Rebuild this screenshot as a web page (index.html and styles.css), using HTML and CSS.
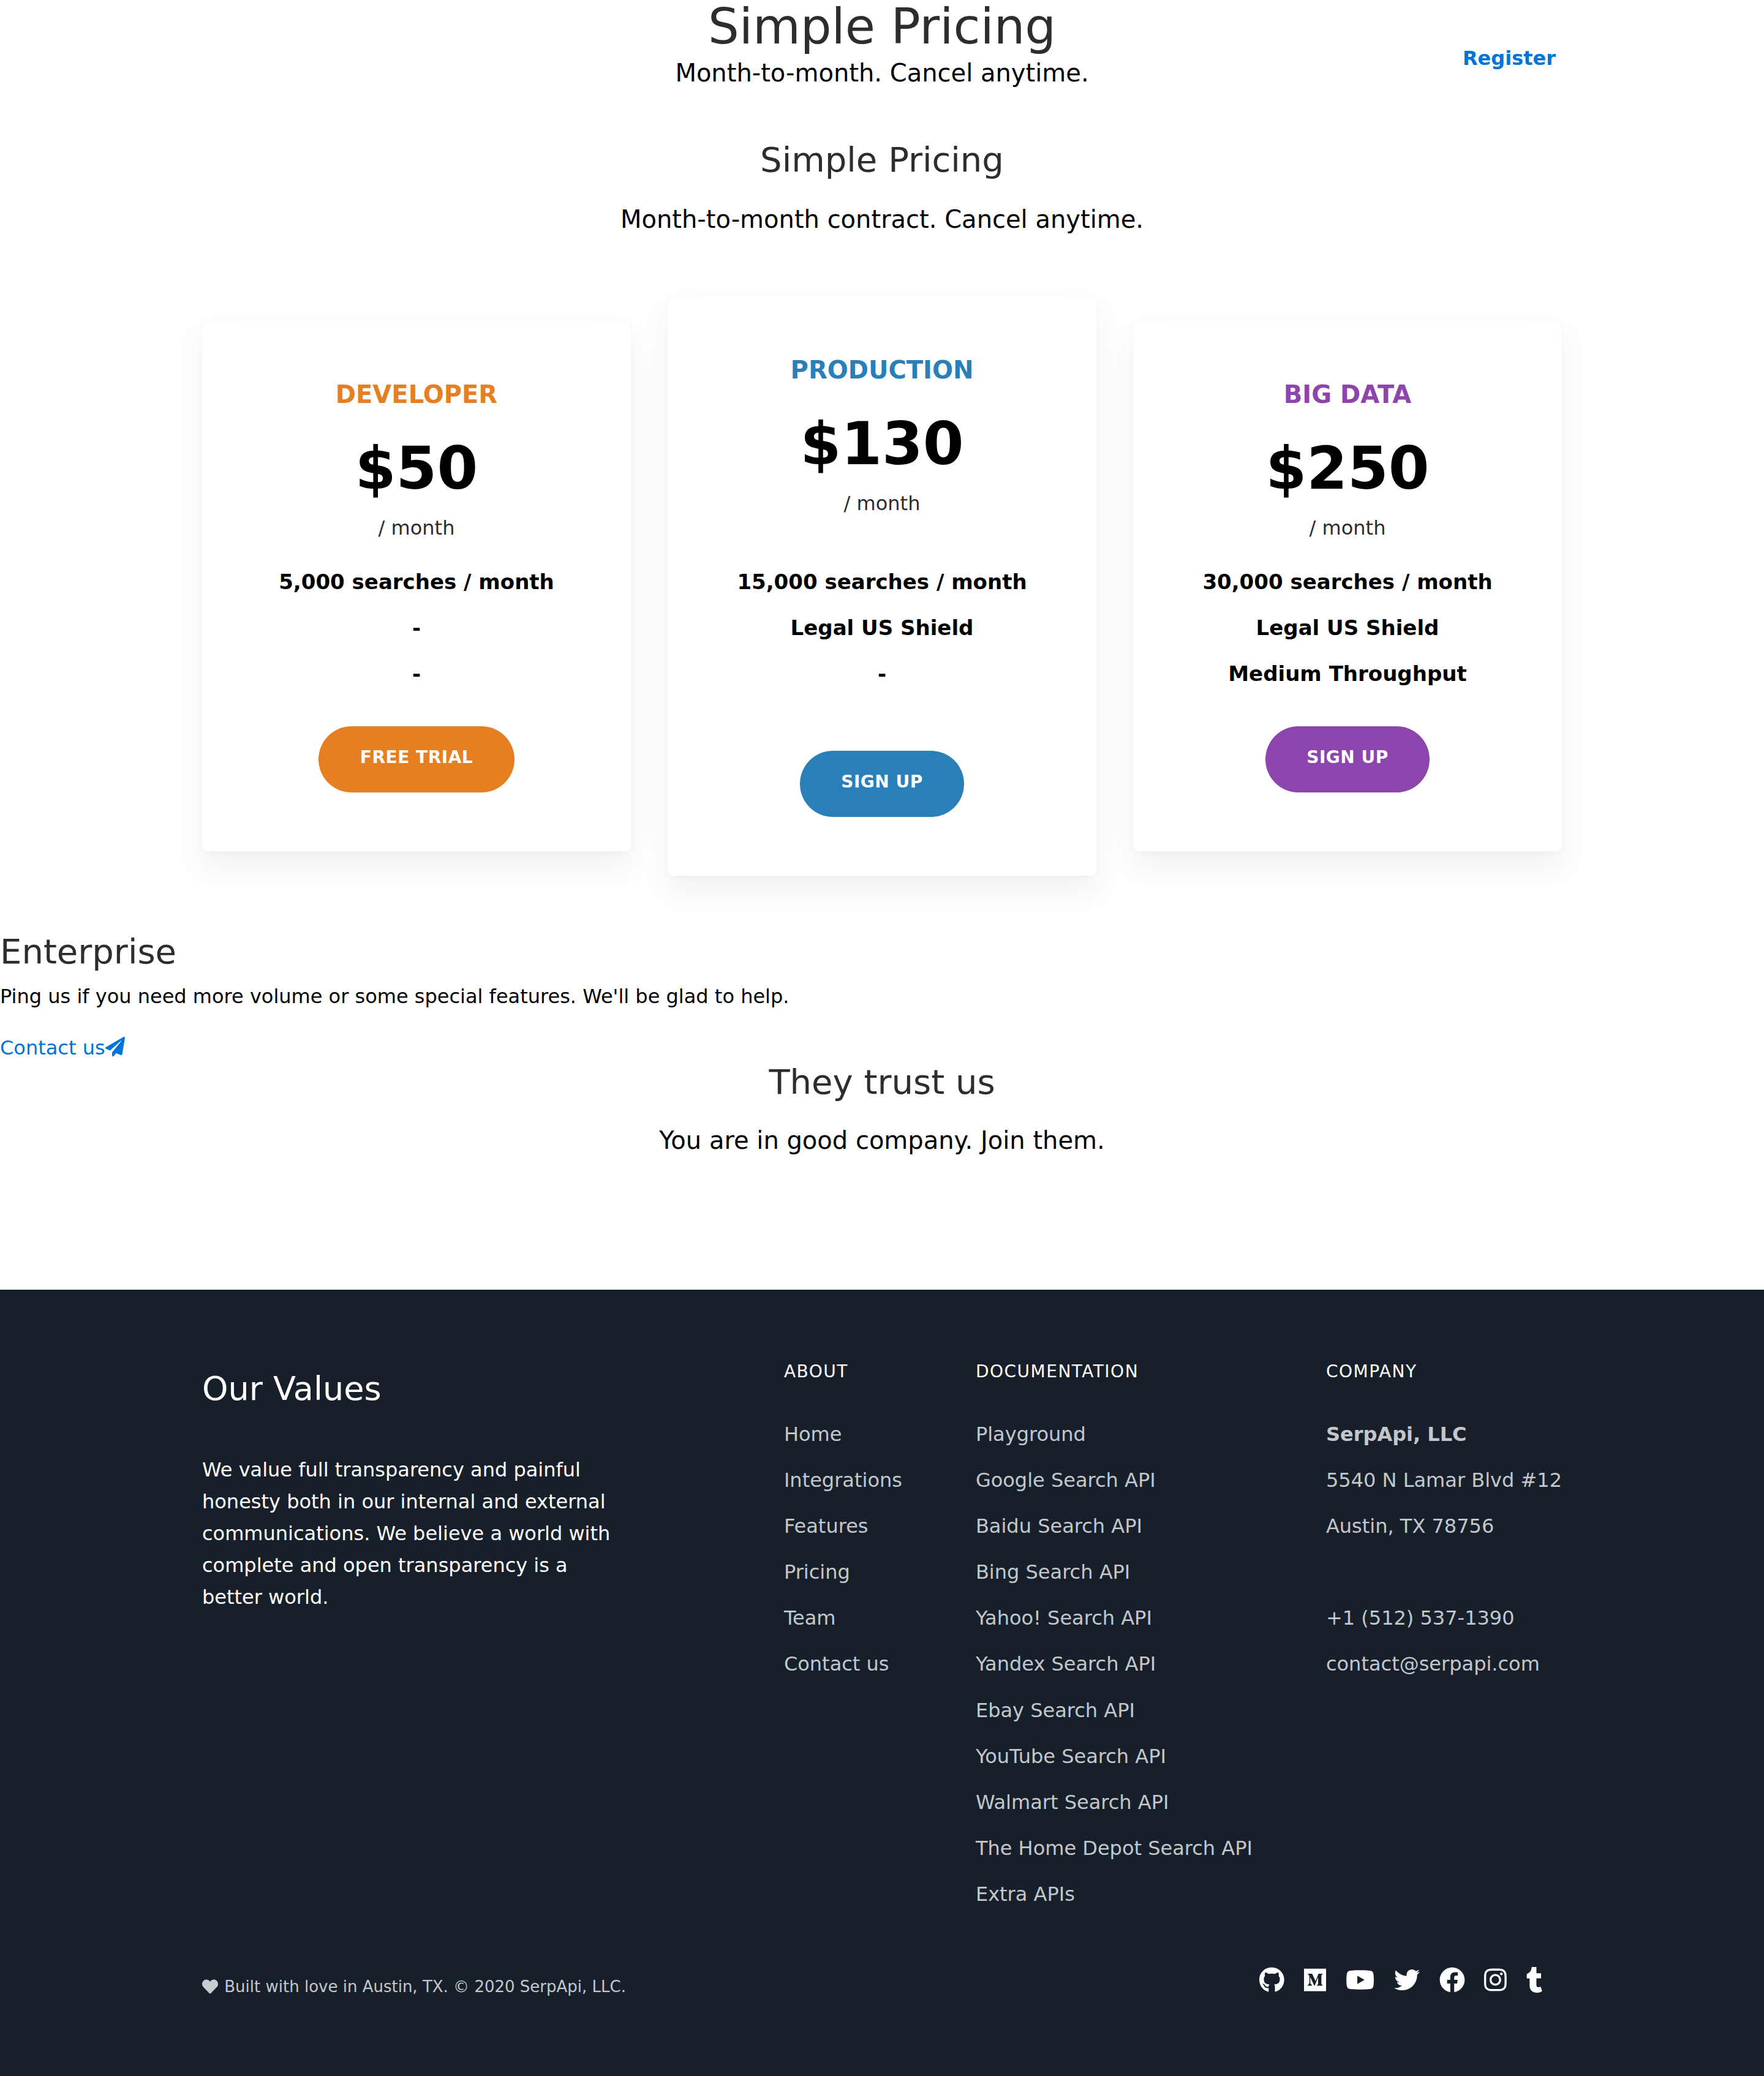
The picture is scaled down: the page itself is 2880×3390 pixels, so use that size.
FILE: index.html
```html
<!DOCTYPE html>
<html lang="en">
<head>
    <meta charset="UTF-8">
    <meta name="viewport" content="width=device-width, initial-scale=1.0">
    <title>Simple Pricing</title>
    <link rel="stylesheet" href="styles.css">
</head>
<body>
    <header class="top-bar">
        <div class="top-title">
            <h1>Simple Pricing</h1>
            <p>Month-to-month. Cancel anytime.</p>
        </div>
        <a class="register" href="#">Register</a>
    </header>

    <section class="intro">
        <h2>Simple Pricing</h2>
        <p>Month-to-month contract. Cancel anytime.</p>
    </section>

    <section class="plans">
        <div class="plan plan-developer">
            <h3>DEVELOPER</h3>
            <div class="price">$50</div>
            <div class="period">/ month</div>
            <ul>
                <li>5,000 searches / month</li>
                <li>-</li>
                <li>-</li>
            </ul>
            <a class="plan-btn" href="#">FREE TRIAL</a>
        </div>
        <div class="plan plan-production">
            <h3>PRODUCTION</h3>
            <div class="price">$130</div>
            <div class="period">/ month</div>
            <ul>
                <li>15,000 searches / month</li>
                <li>Legal US Shield</li>
                <li>-</li>
            </ul>
            <a class="plan-btn" href="#">SIGN UP</a>
        </div>
        <div class="plan plan-bigdata">
            <h3>BIG DATA</h3>
            <div class="price">$250</div>
            <div class="period">/ month</div>
            <ul>
                <li>30,000 searches / month</li>
                <li>Legal US Shield</li>
                <li>Medium Throughput</li>
            </ul>
            <a class="plan-btn" href="#">SIGN UP</a>
        </div>
    </section>

    <section class="enterprise">
        <h2>Enterprise</h2>
        <p>Ping us if you need more volume or some special features. We'll be glad to help.</p>
        <a href="#">Contact us<svg class="plane" viewBox="0 0 512 512"><path d="M476 3.2L12.5 270.6c-18.1 10.4-15.8 35.6 2.2 43.2L121 358.4l287.3-253.2c5.5-4.9 13.3 2.6 8.6 8.3L176 407v80.5c0 23.6 28.5 32.9 42.5 15.8L282 426l124.6 52.2c14.2 6 30.4-2.9 33-18.2l72-432C515 7.8 493.3-6.8 476 3.2z"/></svg></a>
    </section>

    <section class="trust">
        <h2>They trust us</h2>
        <p>You are in good company. Join them.</p>
    </section>

    <footer class="site-footer">
        <div class="footer-cols">
            <div class="values">
                <h2>Our Values</h2>
                <p>We value full transparency and painful honesty both in our internal and external communications. We believe a world with complete and open transparency is a better world.</p>
            </div>
            <div class="footer-col">
                <h4>ABOUT</h4>
                <a href="#">Home</a>
                <a href="#">Integrations</a>
                <a href="#">Features</a>
                <a href="#">Pricing</a>
                <a href="#">Team</a>
                <a href="#">Contact us</a>
            </div>
            <div class="footer-col">
                <h4>DOCUMENTATION</h4>
                <a href="#">Playground</a>
                <a href="#">Google Search API</a>
                <a href="#">Baidu Search API</a>
                <a href="#">Bing Search API</a>
                <a href="#">Yahoo! Search API</a>
                <a href="#">Yandex Search API</a>
                <a href="#">Ebay Search API</a>
                <a href="#">YouTube Search API</a>
                <a href="#">Walmart Search API</a>
                <a href="#">The Home Depot Search API</a>
                <a href="#">Extra APIs</a>
            </div>
            <div class="footer-col">
                <h4>COMPANY</h4>
                <strong>SerpApi, LLC</strong>
                <span>5540 N Lamar Blvd #12</span>
                <span>Austin, TX 78756</span>
                <span>&nbsp;</span>
                <span>+1 (512) 537-1390</span>
                <span>contact@serpapi.com</span>
            </div>
        </div>
        <div class="footer-bottom">
            <p class="built"><svg class="heart" viewBox="0 0 512 512"><path d="M462.3 62.6C407.5 15.9 326 24.3 275.7 76.2L256 96.5l-19.7-20.3C186.1 24.3 104.5 15.9 49.7 62.6c-62.8 53.6-66.1 149.8-9.9 207.9l193.5 199.8c12.5 12.9 32.8 12.9 45.3 0l193.5-199.8c56.3-58.1 53-154.3-9.8-207.9z"/></svg> Built with love in Austin, TX. © 2020 SerpApi, LLC.</p>
            <div class="social">
                <svg viewBox="0 0 496 512"><path d="M165.9 397.4c0 2-2.3 3.6-5.2 3.6-3.3 0-5.6-1.6-5.6-3.6 0-2 2.3-3.6 5.2-3.6 3-.3 5.6 1.3 5.6 3.6zm-31.1-4.5c-.7 2 1.3 4.3 4.3 4.9 2.6 1 5.6 0 6.2-2s-1.3-4.3-4.3-5c-2.6-.7-5.5.3-6.2 2.1zm44.2-1.7c-2.9.7-4.9 2.6-4.6 4.9.3 2 2.9 3.3 5.9 2.6 2.9-.7 4.9-2.6 4.6-4.6-.3-1.9-3-3.2-5.9-2.9zM244.8 8C106.1 8 0 113.3 0 252c0 110.9 69.8 205.8 169.5 239.2 12.8 2.3 17.3-5.6 17.3-12.1 0-6.2-.3-40.4-.3-61.4 0 0-70 15-84.7-29.8 0 0-11.4-29.1-27.8-36.6 0 0-22.9-15.7 1.6-15.4 0 0 24.9 2 38.6 25.8 21.9 38.6 58.6 27.5 72.9 20.9 2.3-16 8.8-27.1 16-33.7-55.9-6.2-112.3-14.3-112.3-110.5 0-27.5 7.6-41.3 23.6-58.9-2.6-6.5-11.1-33.3 2.6-67.9 20.9-6.5 69 27 69 27 20-5.6 41.5-8.5 62.8-8.5s42.8 2.9 62.8 8.5c0 0 48.1-33.6 69-27 13.7 34.7 5.2 61.4 2.6 67.9 16 17.7 25.8 31.5 25.8 58.9 0 96.5-58.9 104.2-114.8 110.5 9.2 7.9 17 22.9 17 46.4 0 33.7-.3 75.4-.3 83.6 0 6.5 4.6 14.4 17.3 12.1C428.2 457.8 496 362.9 496 252 496 113.3 383.5 8 244.8 8z"/></svg>
                <svg viewBox="0 0 448 512"><path d="M0 32v448h448V32H0zm372.2 106.1l-24 23c-2.1 1.6-3.1 4.2-2.7 6.7v169.3c-.4 2.6.6 5.2 2.7 6.7l23.5 23v5.1h-118V367l24.3-23.6c2.4-2.4 2.4-3.1 2.4-6.7V199.8l-67.6 171.6h-9.1L125 199.8v115c-.7 4.8 1 9.7 4.4 13.2l31.6 38.3v5.1H71.2v-5.1l31.6-38.3c3.4-3.5 4.9-8.4 4.1-13.2v-133c.4-3.7-1-7.3-3.8-9.8L75 138.1V133h87.3l67.4 148L289 133.1h83.2v5z"/></svg>
                <svg viewBox="0 0 576 512"><path d="M549.655 124.083c-6.281-23.65-24.787-42.276-48.284-48.597C458.781 64 288 64 288 64S117.22 64 74.629 75.486c-23.497 6.322-42.003 24.947-48.284 48.597-11.412 42.867-11.412 132.305-11.412 132.305s0 89.438 11.412 132.305c6.281 23.65 24.787 41.5 48.284 47.821C117.22 448 288 448 288 448s170.78 0 213.371-11.486c23.497-6.321 42.003-24.171 48.284-47.821 11.412-42.867 11.412-132.305 11.412-132.305s0-89.438-11.412-132.305zm-317.51 213.508V175.185l142.739 81.205-142.739 81.201z"/></svg>
                <svg viewBox="0 0 512 512"><path d="M459.37 151.716c.325 4.548.325 9.097.325 13.645 0 138.72-105.583 298.558-298.558 298.558-59.452 0-114.68-17.219-161.137-47.106 8.447.974 16.568 1.299 25.34 1.299 49.055 0 94.213-16.568 130.274-44.832-46.132-.975-84.792-31.188-98.112-72.772 6.498.974 12.995 1.624 19.818 1.624 9.421 0 18.843-1.3 27.614-3.573-48.081-9.747-84.143-51.98-84.143-102.985v-1.299c13.969 7.797 30.214 12.67 47.431 13.319-28.264-18.843-46.781-51.005-46.781-87.391 0-19.492 5.197-37.36 14.294-52.954 51.655 63.675 129.3 105.258 216.365 109.807-1.624-7.797-2.599-15.918-2.599-24.04 0-57.828 46.782-104.934 104.934-104.934 30.213 0 57.502 12.67 76.67 33.137 23.715-4.548 46.456-13.32 66.599-25.34-7.798 24.366-24.366 44.833-46.132 57.827 21.117-2.273 41.584-8.122 60.426-16.243-14.292 20.791-32.161 39.308-52.628 54.253z"/></svg>
                <svg viewBox="0 0 512 512"><path d="M504 256C504 119 393 8 256 8S8 119 8 256c0 123.78 90.69 226.38 209.25 245V327.69h-63V256h63v-54.64c0-62.15 37-96.48 93.67-96.48 27.14 0 55.52 4.84 55.52 4.84v61h-31.28c-30.8 0-40.41 19.12-40.41 38.73V256h68.78l-11 71.69h-57.78V501C413.31 482.38 504 379.78 504 256z"/></svg>
                <svg viewBox="0 0 448 512"><path d="M224.1 141c-63.6 0-114.9 51.3-114.9 114.9s51.3 114.9 114.9 114.9S339 319.5 339 255.9 287.7 141 224.1 141zm0 189.6c-41.1 0-74.7-33.5-74.7-74.7s33.5-74.7 74.7-74.7 74.7 33.5 74.7 74.7-33.6 74.7-74.7 74.7zm146.4-194.3c0 14.9-12 26.8-26.8 26.8-14.9 0-26.8-12-26.8-26.8s12-26.8 26.8-26.8 26.8 12 26.8 26.8zm76.1 27.2c-1.7-35.9-9.9-67.7-36.2-93.9-26.2-26.2-58-34.4-93.9-36.2-37-2.1-147.9-2.1-184.9 0-35.8 1.7-67.6 9.9-93.9 36.1s-34.4 58-36.2 93.9c-2.1 37-2.1 147.9 0 184.9 1.7 35.9 9.9 67.7 36.2 93.9s58 34.4 93.9 36.2c37 2.1 147.9 2.1 184.9 0 35.9-1.7 67.7-9.9 93.9-36.2 26.2-26.2 34.4-58 36.2-93.9 2.1-37 2.1-147.8 0-184.8zM398.8 388c-7.8 19.6-22.9 34.7-42.6 42.6-29.5 11.7-99.5 9-132.1 9s-102.7 2.6-132.1-9c-19.6-7.8-34.7-22.9-42.6-42.6-11.7-29.5-9-99.5-9-132.1s-2.6-102.7 9-132.1c7.8-19.6 22.9-34.7 42.6-42.6 29.5-11.7 99.5-9 132.1-9s102.7-2.6 132.1 9c19.6 7.8 34.7 22.9 42.6 42.6 11.7 29.5 9 99.5 9 132.1s2.7 102.7-9 132.1z"/></svg>
                <svg viewBox="0 0 320 512"><path d="M309.8 480.3c-13.6 14.5-50 31.7-97.4 31.7-120.8 0-147-88.8-147-140.6v-144H17.9c-5.5 0-10-4.5-10-10v-68c0-7.2 4.5-13.6 11.3-16 62-21.8 81.5-76 84.3-117.1.8-11 6.5-16.3 16.1-16.3h70.9c5.5 0 10 4.5 10 10v115.2h83c5.5 0 10 4.4 10 9.9v81.7c0 5.5-4.5 10-10 10h-83.4V360c0 34.2 23.7 53.6 68 35.8 4.8-1.9 9-3.2 12.7-2.2 3.5.9 5.8 3.4 7.4 7.9l22 64.3c1.8 5 3.3 10.6-.4 14.5z"/></svg>
            </div>
        </div>
    </footer>
</body>
</html>
```

FILE: styles.css
```css
* {
    box-sizing: border-box;
}
body {
    margin: 0;
    font-family: "DejaVu Sans", sans-serif;
    color: #000;
    background: #fff;
}
a {
    text-decoration: none;
    color: #0074d9;
}
h1, h2, h3, h4, p, ul {
    margin: 0;
    padding: 0;
    font-weight: normal;
}

/* top */
.top-bar {
    position: relative;
    height: 172px;
    padding-top: 2px;
    text-align: center;
}
.top-title h1 {
    font-size: 80px;
    line-height: 84px;
    color: #2d2d2d;
}
.top-title p {
    font-size: 40px;
    line-height: 66px;
}
.register {
    position: absolute;
    right: 340px;
    top: 72px;
    font-size: 32px;
    line-height: 46px;
    font-weight: bold;
}

.intro, .trust {
    text-align: center;
}
.intro h2, .trust h2 {
    font-size: 56px;
    line-height: 80px;
    color: #2d2d2d;
}
.intro p, .trust p {
    font-size: 40px;
    line-height: 60px;
    margin-top: 27px;
}
.trust p {
    margin-top: 25px;
}
.intro {
    padding-top: 49px;
}

/* plans */
.plans {
    display: flex;
    justify-content: center;
    align-items: center;
    gap: 60px;
    margin-top: 97px;
}
.plan {
    width: 700px;
    padding: 89px 0 96px;
    text-align: center;
    background: #fff;
    border-radius: 8px;
    box-shadow: 0 24px 48px rgba(50, 50, 93, 0.07), 0 4px 10px rgba(0, 0, 0, 0.02);
}
.plan h3 {
    font-size: 40px;
    line-height: 60px;
    font-weight: bold;
}
.price {
    font-size: 96px;
    line-height: 120px;
    font-weight: bold;
    margin-top: 31px;
}
.period {
    font-size: 32px;
    line-height: 60px;
    margin-top: 7px;
    color: #2d2d2d;
}
.plan ul {
    list-style: none;
    margin-top: 21px;
    font-size: 34px;
    line-height: 75px;
    font-weight: bold;
}
.plan-btn {
    display: inline-block;
    margin-top: 48px;
    padding: 0 67.5px;
    height: 108px;
    line-height: 102px;
    border-radius: 54px;
    color: #fff;
    font-size: 28px;
    font-weight: bold;
    letter-spacing: 0.5px;
}
.plan-developer h3 { color: #e67e22; }
.plan-developer .plan-btn { background: #e67e22; }
.plan-production h3 { color: #2980b9; }
.plan-production .plan-btn { background: #2980b9; margin-top: 88px; }
.plan-production ul { margin-top: 61px; }
.plan-bigdata h3 { color: #8e44ad; }
.plan-bigdata .plan-btn { background: #8e44ad; }

/* enterprise */
.enterprise {
    margin-top: 84px;
}
.enterprise h2 {
    font-size: 56px;
    line-height: 80px;
    color: #2d2d2d;
}
.enterprise p {
    font-size: 32px;
    line-height: 50px;
    margin-top: 8px;
}
.enterprise a {
    display: block;
    font-size: 32px;
    line-height: 50px;
    margin-top: 34px;
}
.plane {
    width: 32px;
    height: 32px;
    fill: #0074d9;
    vertical-align: -3px;
}
.trust {
    margin-top: -9px;
}

/* footer */
.site-footer {
    margin-top: 214px;
    height: 1284px;
    padding: 122px 330px 0;
    background: #17202a;
    color: #fff;
}
.footer-cols {
    display: flex;
    gap: 120px;
}
.values {
    flex: 1;
}
.values h2 {
    font-size: 54px;
    line-height: 80px;
}
.values p {
    font-size: 32px;
    line-height: 52px;
    width: 700px;
    margin-top: 66px;
}
.footer-col {
    display: flex;
    flex-direction: column;
    white-space: nowrap;
    font-size: 32px;
    line-height: 75.1px;
    color: #c3c7cc;
}
.footer-col a {
    color: #c3c7cc;
}
.footer-col h4 {
    font-size: 28px;
    line-height: 24px;
    letter-spacing: 1.5px;
    color: #fff;
    margin-bottom: 53px;
}
.footer-bottom {
    display: flex;
    justify-content: space-between;
    align-items: center;
    margin-top: 76px;
}
.built {
    font-size: 26px;
    line-height: 30px;
    padding-top: 22px;
    color: #c3c7cc;
}
.heart {
    width: 26px;
    height: 26px;
    fill: #c9cdd1;
    vertical-align: -4px;
    margin-right: 2px;
}
.social {
    display: flex;
    align-items: center;
    gap: 31.7px;
    margin-right: 32px;
}
.social svg {
    height: 42px;
    fill: #fff;
}
```
